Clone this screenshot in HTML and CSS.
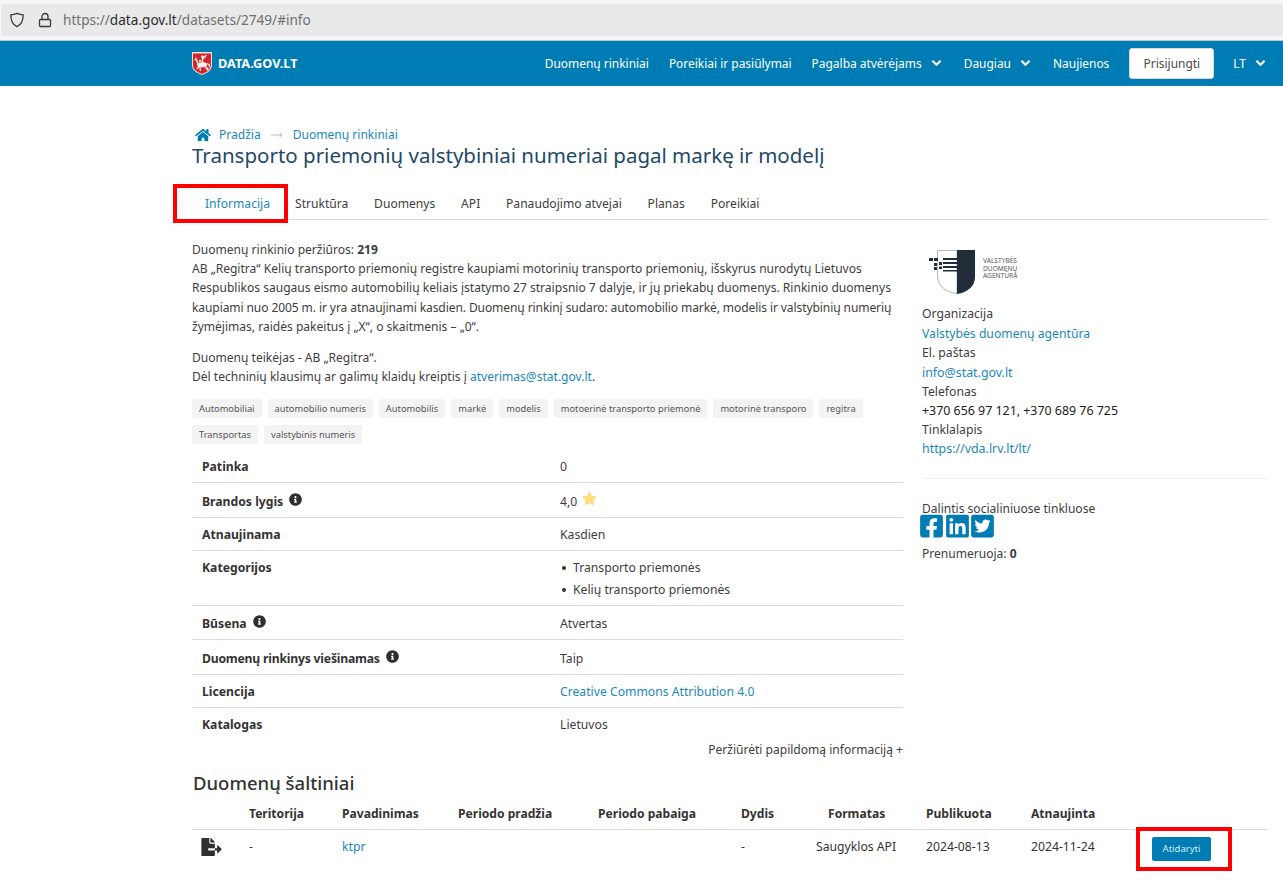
FILE: index.html
```html
<!DOCTYPE html>
<html lang="lt">
<head>
<meta charset="utf-8">
<title>Transporto priemonių valstybiniai numeriai pagal markę ir modelį</title>
<link rel="stylesheet" href="styles.css">
</head>
<body>
<div class="browser">
  <div class="urlbar">
    <svg class="ub-icon" viewBox="0 0 16 16" width="16" height="16"><path d="M8 1.300c2 1 3.800 1.400 6.200 1.500 0 5.200-1.200 9.600-6.200 11.900C3 12.400 1.800 8 1.800 2.800 4.200 2.700 6 2.300 8 1.300z" fill="none" stroke="#3a3a3a" stroke-width="1.300"/></svg>
    <svg class="ub-icon" viewBox="0 0 16 16" width="16" height="16"><path d="M3.500 7.500h9a1 1 0 0 1 1 1v5a1 1 0 0 1-1 1h-9a1 1 0 0 1-1-1v-5a1 1 0 0 1 1-1zM5 7.500V4.500a3 3 0 0 1 6 0v3" fill="none" stroke="#3a3a3a" stroke-width="1.300"/></svg>
    <span class="url">https://<b>data.gov.lt</b>/datasets/2749/#info</span>
  </div>
</div>
<header class="topnav">
  <a class="brand">
    <svg class="arms" viewBox="0 0 20 23" width="20" height="23">
      <path d="M0 0h20v13c0 5.500-4.500 8-10 10C4.500 21 0 18.500 0 13z" fill="#e8e4e0"/>
      <path d="M1 1.500h18V13c0 4.800-4 7-9 9-5-2-9-4.200-9-9z" fill="#d8232a"/>
      <path d="M5 12.500c2-2.500 7-3 9.500-1.500 1 1.500.5 3-1 4l-6 .5c-1.500-.5-2.500-1.500-2.500-3z" fill="#f6f3ee"/>
      <path d="M6 12L4 6.500 2.800 8.500M7 15l-2.500 2M8 15.500l.5 3.500M13 15l3 1.500-.5 2M13.500 14.500l1.500 3M14.500 11.500l2.500 1 1 3M10.500 6v5M10.500 7.500l4-4.500" fill="none" stroke="#f6f3ee" stroke-width="1.300"/>
      <circle cx="10.500" cy="5" r="1.400" fill="#f6f3ee"/>
      <circle cx="8" cy="9" r="1.500" fill="#e9d98a"/>
    </svg>
    <span>DATA.GOV.LT</span>
  </a>
  <nav class="navlinks">
    <a>Duomenų rinkiniai</a>
    <a>Poreikiai ir pasiūlymai</a>
    <a>Pagalba atvėrėjams <svg class="chev" viewBox="0 0 12 8" width="11" height="8"><path d="M1.500 1.500L6 6l4.500-4.500" fill="none" stroke="#fff" stroke-width="2.200"/></svg></a>
    <a>Daugiau <svg class="chev" viewBox="0 0 12 8" width="11" height="8"><path d="M1.500 1.500L6 6l4.500-4.500" fill="none" stroke="#fff" stroke-width="2.200"/></svg></a>
    <a>Naujienos</a>
    <a class="login">Prisijungti</a>
    <a class="lang">LT <svg class="chev" viewBox="0 0 12 8" width="11" height="8"><path d="M1.500 1.500L6 6l4.500-4.500" fill="none" stroke="#fff" stroke-width="2.200"/></svg></a>
  </nav>
</header>
<main class="page">
  <div class="crumbs">
    <svg class="home" viewBox="0 0 576 512" width="16" height="14"><path fill="#007cb4" d="M280.370 148.260L96 300.110V464a16 16 0 0 0 16 16l112.060-.29a16 16 0 0 0 15.920-16V368a16 16 0 0 1 16-16h64a16 16 0 0 1 16 16v95.640a16 16 0 0 0 16 16.050L464 480a16 16 0 0 0 16-16V300L295.670 148.260a12.190 12.190 0 0 0-15.300 0zM571.600 251.470L488 182.560V44.050a12 12 0 0 0-12-12h-56a12 12 0 0 0-12 12v72.610L318.470 43a48 48 0 0 0-61 0L4.340 251.470a12 12 0 0 0-1.600 16.900l25.500 31A12 12 0 0 0 45.150 301l235.220-193.740a12.190 12.190 0 0 1 15.300 0L530.900 301a12 12 0 0 0 16.900-1.600l25.500-31a12 12 0 0 0-1.700-16.930z"/></svg>
    <a>Pradžia</a><svg class="arrow" viewBox="0 0 12 8" width="12" height="8"><path d="M0 4h11M8.500 1.800L11 4 8.500 6.200" fill="none" stroke="#b5b5b5" stroke-width=".9"/></svg><a>Duomenų rinkiniai</a>
  </div>
  <h1>Transporto priemonių valstybiniai numeriai pagal markę ir modelį</h1>
  <div class="tabs">
    <a class="tab active">Informacija<span class="redbox tabbox"></span></a>
    <a class="tab">Struktūra</a>
    <a class="tab">Duomenys</a>
    <a class="tab">API</a>
    <a class="tab">Panaudojimo atvejai</a>
    <a class="tab">Planas</a>
    <a class="tab">Poreikiai</a>
  </div>
  <div class="columns">
    <section class="left">
      <p class="desc">Duomenų rinkinio peržiūros: <b>219</b><br>AB „Regitra“ Kelių transporto priemonių registre kaupiami motorinių transporto priemonių, išskyrus nurodytų Lietuvos<br>Respublikos saugaus eismo automobilių keliais įstatymo 27 straipsnio 7 dalyje, ir jų priekabų duomenys. Rinkinio duomenys<br><span class="tight">kaupiami nuo 2005 m. ir yra atnaujinami kasdien. Duomenų rinkinį sudaro: automobilio markė, modelis ir valstybinių numerių</span><br>žymėjimas, raidės pakeitus į „X“, o skaitmenis – „0“.</p>
      <p class="desc contact">Duomenų teikėjas - AB „Regitra“.<br>Dėl techninių klausimų ar galimų klaidų kreiptis į <a>atverimas@stat.gov.lt</a>.</p>
      <div class="tags">
        <span class="tag">Automobiliai</span><span class="tag">automobilio numeris</span><span class="tag">Automobilis</span><span class="tag">markė</span><span class="tag">modelis</span><span class="tag">motoerinė transporto priemonė</span><span class="tag">motorinė transporo</span><span class="tag">regitra</span><span class="tag">Transportas</span><span class="tag">valstybinis numeris</span>
      </div>
      <dl class="facts">
        <div class="fact"><dt>Patinka</dt><dd>0</dd></div>
        <div class="fact fact-tall"><dt>Brandos lygis <svg class="info" viewBox="0 0 512 512" width="13" height="13"><path fill="#2f2f2f" d="M256 8C119.043 8 8 119.083 8 256c0 136.997 111.043 248 248 248s248-111.003 248-248C504 119.083 392.957 8 256 8zm0 110c23.196 0 42 18.804 42 42s-18.804 42-42 42-42-18.804-42-42 18.804-42 42-42zm56 254c0 6.627-5.373 12-12 12h-88c-6.627 0-12-5.373-12-12v-24c0-6.627 5.373-12 12-12h12v-64h-12c-6.627 0-12-5.373-12-12v-24c0-6.627 5.373-12 12-12h64c6.627 0 12 5.373 12 12v100h12c6.627 0 12 5.373 12 12v24z"/></svg></dt><dd>4,0 <svg class="star" viewBox="0 0 576 512" width="15" height="13"><path fill="#ffdc7d" d="M259.300 17.800L194 150.200 47.900 171.500c-26.200 3.800-36.700 36.100-17.700 54.600l105.700 103-25 145.500c-4.500 26.300 23.200 46 46.400 33.700L288 439.600l130.700 68.700c23.200 12.200 50.900-7.400 46.400-33.700l-25-145.500 105.700-103c19-18.500 8.500-50.800-17.700-54.600L382 150.200 316.700 17.800c-11.700-23.600-45.600-23.900-57.400 0z"/></svg></dd></div>
        <div class="fact"><dt>Atnaujinama</dt><dd>Kasdien</dd></div>
        <div class="fact fact-list"><dt>Kategorijos</dt><dd><ul class="cats"><li>Transporto priemonės</li><li>Kelių transporto priemonės</li></ul></dd></div>
        <div class="fact fact-mid"><dt>Būsena <svg class="info" viewBox="0 0 512 512" width="13" height="13"><path fill="#2f2f2f" d="M256 8C119.043 8 8 119.083 8 256c0 136.997 111.043 248 248 248s248-111.003 248-248C504 119.083 392.957 8 256 8zm0 110c23.196 0 42 18.804 42 42s-18.804 42-42 42-42-18.804-42-42 18.804-42 42-42zm56 254c0 6.627-5.373 12-12 12h-88c-6.627 0-12-5.373-12-12v-24c0-6.627 5.373-12 12-12h12v-64h-12c-6.627 0-12-5.373-12-12v-24c0-6.627 5.373-12 12-12h64c6.627 0 12 5.373 12 12v100h12c6.627 0 12 5.373 12 12v24z"/></svg></dt><dd class="dd-up">Atvertas</dd></div>
        <div class="fact fact-tall"><dt class="dt-long">Duomenų rinkinys viešinamas <svg class="info" viewBox="0 0 512 512" width="13" height="13"><path fill="#2f2f2f" d="M256 8C119.043 8 8 119.083 8 256c0 136.997 111.043 248 248 248s248-111.003 248-248C504 119.083 392.957 8 256 8zm0 110c23.196 0 42 18.804 42 42s-18.804 42-42 42-42-18.804-42-42 18.804-42 42-42zm56 254c0 6.627-5.373 12-12 12h-88c-6.627 0-12-5.373-12-12v-24c0-6.627 5.373-12 12-12h12v-64h-12c-6.627 0-12-5.373-12-12v-24c0-6.627 5.373-12 12-12h64c6.627 0 12 5.373 12 12v100h12c6.627 0 12 5.373 12 12v24z"/></svg></dt><dd class="dd-up">Taip</dd></div>
        <div class="fact"><dt>Licencija</dt><dd><a>Creative Commons Attribution 4.0</a></dd></div>
        <div class="fact last"><dt>Katalogas</dt><dd>Lietuvos</dd></div>
      </dl>
      <div class="more">Peržiūrėti papildomą informaciją +</div>
    </section>
    <aside class="right">
      <div class="vda">
        <svg viewBox="0 0 54 44" width="54" height="44" class="vda-shield">
          <path d="M8.500 .5H28v43C17 42.500 8.500 36 8.500 25z" fill="#fff" stroke="#a2a6ab" stroke-width=".8"/>
          <path d="M28 0h18v27c0 9-7 15.500-18 17z" fill="#232c3b"/>
          <path d="M0 8h4v3H0zM5 8h4v3H5zM14 8h14v2H14zM14 12h14v2H14zM10 12h3v3h-3zM5 13h3v3H5zM10 16.500h3v2.500h-3zM5 17h3v3H5zM14 16h14v2H14zM14 20h14v1.500H14z" fill="#232c3b"/>
        </svg>
        <div class="vda-text">VALSTYBĖS<br>DUOMENŲ<br>AGENTŪRA</div>
      </div>
      <div class="org">
        <div>Organizacija</div>
        <a class="org-name">Valstybės duomenų agentūra</a>
        <div>El. paštas</div>
        <a>info@stat.gov.lt</a>
        <div>Telefonas</div>
        <div class="phone">+370 656 97 121, +370 689 76 725</div>
        <div>Tinklalapis</div>
        <a>https://vda.lrv.lt/lt/</a>
      </div>
      <div class="share">
        <div>Dalintis socialiniuose tinkluose</div>
        <div class="social">
          <svg viewBox="0 0 448 512" width="23" height="26"><path fill="#007cb4" d="M400 32H48A48 48 0 0 0 0 80v352a48 48 0 0 0 48 48h137.250V327.690h-63V256h63v-54.640c0-62.150 37-96.480 93.670-96.480 27.140 0 55.520 4.840 55.520 4.840v61h-31.270c-30.810 0-40.420 19.120-40.420 38.730V256h68.780l-11 71.690h-57.780V480H400a48 48 0 0 0 48-48V80a48 48 0 0 0-48-48z"/></svg>
          <svg viewBox="0 0 448 512" width="23" height="26"><path fill="#007cb4" d="M416 32H31.900C14.300 32 0 46.500 0 64.300v383.400C0 465.500 14.300 480 31.900 480H416c17.600 0 32-14.500 32-32.300V64.300c0-17.800-14.400-32.300-32-32.300zM135.400 416H69V202.200h66.500V416zm-33.200-243c-21.300 0-38.500-17.300-38.500-38.500S80.900 96 102.200 96c21.200 0 38.500 17.300 38.500 38.500 0 21.300-17.200 38.500-38.500 38.500zm282.100 243h-66.400V312c0-24.800-.5-56.700-34.500-56.700-34.600 0-39.900 27-39.900 54.900V416h-66.400V202.200h63.700v29.200h.9c8.900-16.800 30.600-34.500 62.900-34.500 67.200 0 79.700 44.300 79.700 101.900V416z"/></svg>
          <svg viewBox="0 0 448 512" width="23" height="26"><path fill="#007cb4" d="M400 32H48C21.500 32 0 53.500 0 80v352c0 26.500 21.500 48 48 48h352c26.500 0 48-21.500 48-48V80c0-26.500-21.500-48-48-48zm-48.900 158.800c.2 2.800.2 5.700.2 8.500 0 86.700-66 186.600-186.600 186.600-37.200 0-71.700-10.800-100.700-29.400 5.300.6 10.400.8 15.800.8 30.700 0 58.900-10.400 81.400-28-28.800-.6-53-19.500-61.300-45.500 10.100 1.500 19.200 1.500 29.600-1.200-30-6.100-52.500-32.500-52.500-64.400v-.8c8.700 4.900 18.900 7.900 29.600 8.300a65.447 65.447 0 0 1-29.200-54.600c0-12.200 3.200-23.400 8.900-33.100 32.300 39.800 80.800 65.800 135.200 68.600-9.300-44.500 24-80.600 64-80.600 18.900 0 35.900 7.900 47.900 20.700 14.800-2.800 29-7.200 41.600-14.600-4.900 15.200-15.200 28-28.800 36.100 13.200-1.400 26-5.100 37.800-10.200-8.900 13.100-20.100 24.700-32.900 34z"/></svg>
        </div>
        <div class="subs">Prenumeruoja: <b>0</b></div>
      </div>
    </aside>
  </div>
  <h2>Duomenų šaltiniai</h2>
  <div class="sources">
    <div class="src-row src-head">
      <span></span><span>Teritorija</span><span>Pavadinimas</span><span>Periodo pradžia</span><span>Periodo pabaiga</span><span>Dydis</span><span class="center">Formatas</span><span>Publikuota</span><span>Atnaujinta</span><span></span>
    </div>
    <div class="src-row src-body">
      <svg viewBox="0 0 576 512" width="21" height="18" class="fileexp"><path fill="#2f2f2f" d="M384 121.900c0-6.300-2.500-12.400-7-16.900L279.100 7c-4.500-4.500-10.600-7-17-7H256v128h128zM571 308l-95.700-96.400c-10.100-10.100-27.400-3-27.400 11.300V288h-64v64h64v65.200c0 14.300 17.300 21.400 27.400 11.300L571 332c6.600-6.600 6.600-17.400 0-24zm-379 28v-32c0-8.800 7.200-16 16-16h176V160H248c-13.200 0-24-10.800-24-24V0H24C10.700 0 0 10.700 0 24v464c0 13.300 10.700 24 24 24h336c13.300 0 24-10.700 24-24V352H208c-8.800 0-16-7.200-16-16z"/></svg>
      <span>-</span><a>ktpr</a><span></span><span></span><span>-</span><span>Saugyklos API</span><span>2024-08-13</span><span>2024-11-24</span>
      <span class="btncell"><a class="open">Atidaryti</a><span class="redbox btnbox"></span></span>
    </div>
  </div>
</main>
</body>
</html>
```

FILE: styles.css
```css
* { box-sizing: border-box; }
html, body { margin: 0; padding: 0; }
body {
  width: 1283px;
  height: 883px;
  overflow: hidden;
  background: #fff;
  color: #3d3d3d;
  font-family: "Noto Sans", "Open Sans", sans-serif;
  font-size: 12.2px;
  line-height: 19.2px;
}
a { color: #1b87bb; text-decoration: none; }
p { margin: 0; }

.browser { height: 41px; background: #f6f6f6; padding: 4px 0 0 1px; border-bottom: 1px solid #c4c4c4; }
.urlbar { height: 32px; background: #e9e9e9; border-radius: 4px 0 0 4px; display: flex; align-items: center; padding-left: 8px; gap: 12px; }
.ub-icon { flex: none; }
.url { color: #6f6f6f; font-size: 13.600px; margin-left: -2px; }
.url b { color: #2c2c2c; font-weight: 400; }

.topnav { height: 45px; background: #007cb4; display: flex; align-items: center; justify-content: space-between; padding: 0 15px 0 192px; }
.brand { display: flex; align-items: center; gap: 6px; color: #fff; font-weight: 700; font-size: 12.700px; }
.arms { flex: none; }
.navlinks { display: flex; align-items: center; gap: 20px; font-size: 11.950px; }
.navlinks a { color: #fff; display: flex; align-items: center; gap: 9px; white-space: nowrap; }
.navlinks .login { background: #fff; color: #4a4a4a; height: 31px; width: 85px; justify-content: center; border-radius: 3px; border: 1px solid #d9d9d9; }
.navlinks .lang { margin-left: -1px; }
.chev { flex: none; margin-right: 2px; }

.page { padding: 0 15px 0 192px; position: relative; }
.crumbs { display: flex; align-items: center; height: 18px; margin-top: 40px; padding-left: 3px; gap: 8px; font-size: 12.050px; }
.crumbs a { color: #1b87bb; }
.arrow { flex: none; margin: 0 2px; }
h1 { margin: -1px 0 0; font-size: 20.500px; line-height: 24px; font-weight: 400; color: #21496a; }

.tabs { display: flex; height: 35px; margin-top: 18px; border-bottom: 1px solid #dcdcdc; font-size: 12.100px; }
.tab { color: #3d3d3d; padding: 9px 0 0 0; margin-right: 25.800px; position: relative; white-space: nowrap; }
.tab.active { color: #1b87bb; width: 90px; margin-right: 13px; padding-left: 13px; border-bottom: 1px solid #007cb4; height: 35px; }

.redbox { position: absolute; border: 4px solid #f00; pointer-events: none; }
.tabbox { left: -19px; top: -1px; width: 115px; height: 39px; }

.columns { display: flex; margin-top: 20px; }
.left { width: 711px; flex: none; }
.right { margin-left: 19px; width: 346px; }
.desc { white-space: nowrap; font-size: 12.050px; }
.tight { letter-spacing: -0.1px; }
.contact { margin-top: 12px; }
.desc a { color: #1b87bb; }

.tags { display: flex; flex-wrap: wrap; gap: 7px 6px; margin-top: 13px; }
.tag { background: #f3f3f3; border-radius: 3px; padding: 0 7px; height: 19px; line-height: 19px; font-size: 9.300px; color: #555; white-space: nowrap; }

.facts { margin: 6px 0 0; line-height: 19px; }
.fact { display: grid; grid-template-columns: 358px 1fr; padding: 7px 10px 6px; border-bottom: 1px solid #dcdcdc; }
.fact-tall { padding-top: 9px; }
.fact-mid { padding-top: 8px; }
.fact-list { padding-bottom: 4px; }
.fact.last { border-bottom: none; }
.fact dt { font-weight: 700; color: #333; }
.fact dd { margin: 0; }
.dt-long { letter-spacing: -0.2px; }
.dd-up { margin-top: -1px; }
.info { margin-left: 3px; vertical-align: 0; }
.star { margin-left: 2px; vertical-align: 1px; }
.cats { margin: -1px 0 0; padding: 0; list-style: none; }
.cats li { padding-left: 13px; position: relative; line-height: 22px; }
.cats li::before { content: ""; position: absolute; left: 2px; top: 9px; width: 4px; height: 4px; background: #333; border-radius: 50%; }
.more { text-align: right; margin-top: 0; font-size: 12.050px; }

.vda { display: flex; align-items: flex-start; height: 44px; margin-top: 10px; margin-left: 7px; }
.vda-text { font-size: 6.600px; line-height: 7.500px; color: #555; margin: 7px 0 0 0; white-space: nowrap; }
.org { margin-top: 10px; }
.org > * { display: block; }
.org a { font-size: 12.400px; }
.org .org-name { font-size: 12.200px; padding-top: 1px; }
.phone { color: #222; font-size: 12.400px; }
.share { margin-top: 19px; border-top: 1px solid #eeeeee; padding-top: 20px; font-size: 12.050px; }
.social { display: flex; gap: 2.500px; margin-left: -2px; height: 26px; margin-top: -5px; }
.subs { margin-top: 5.500px; }

h2 { margin: 11px 0 0 1px; font-size: 18.500px; line-height: 24px; font-weight: 500; color: #333; }
.sources { margin-top: 4px; }
.src-row { display: grid; grid-template-columns: 57px 93px 116px 140px 143px 75px 110px 105px 107px 130px; align-items: center; }
.src-head { font-weight: 700; height: 31px; padding-bottom: 1px; border-bottom: 1px solid #dcdcdc; color: #333; font-size: 12.100px; }
.src-head .center { padding-left: 12px; }
.src-body { height: 34px; color: #333; }
.fileexp { margin-left: 9px; }
.btncell { position: relative; display: block; align-self: start; margin-top: 7px; height: 24px; padding-left: 14px; }
.open { display: block; width: 59px; height: 24px; line-height: 24px; text-align: center; background: #007cb4; color: #d6eaf5; font-size: 9.500px; border-radius: 2px; }
.btnbox { left: -2px; top: -10px; width: 96px; height: 44px; }
```
